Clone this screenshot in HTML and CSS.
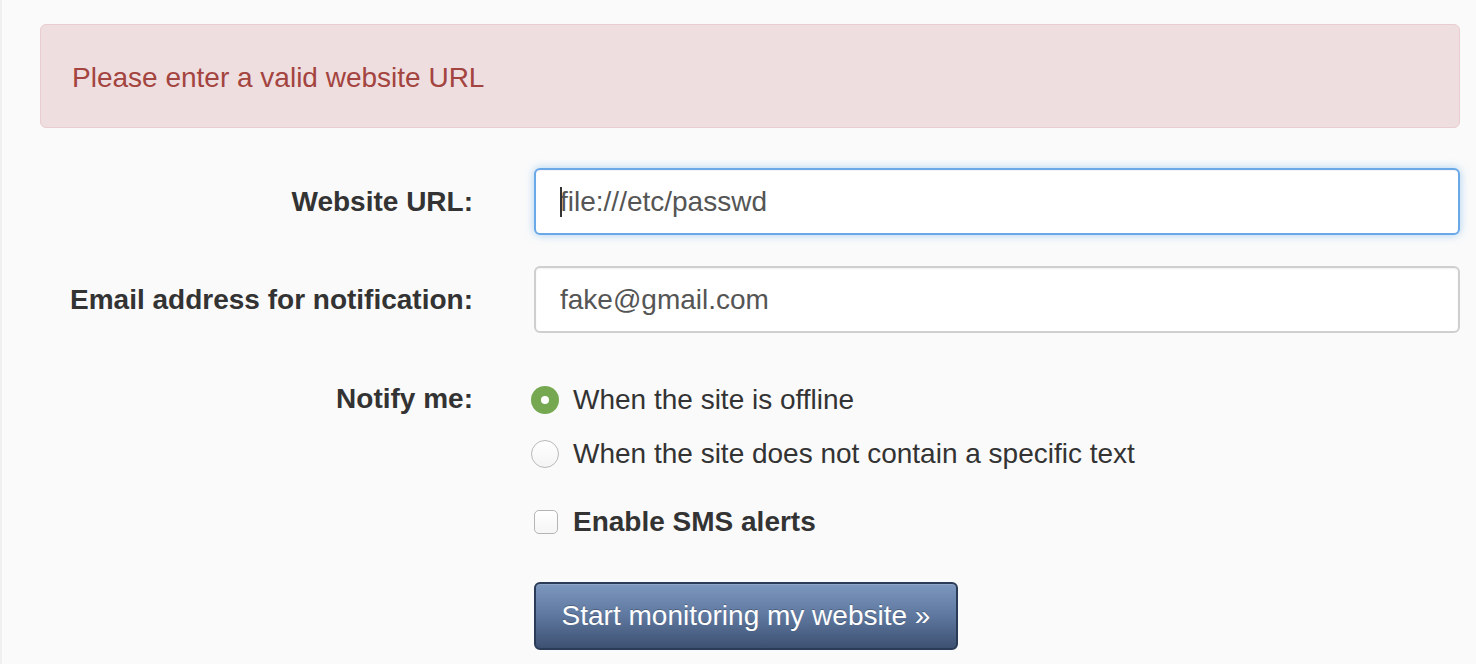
FILE: index.html
```html
<!DOCTYPE html>
<html>
<head>
<meta charset="utf-8">
<link rel="stylesheet" href="styles.css">
</head>
<body>
<div class="page">
  <div class="alert">Please enter a valid website URL</div>
  <form class="form">
    <label class="label row-url" for="url">Website URL:</label>
    <div class="field row-url">
      <div class="input focus"><span class="caret"></span>file:///etc/passwd</div>
    </div>
    <label class="label row-email" for="email">Email address for notification:</label>
    <div class="field row-email">
      <div class="input">fake@gmail.com</div>
    </div>
    <div class="label row-notify">Notify me:</div>
    <div class="field row-notify options">
      <div class="option"><span class="radio checked"></span><span>When the site is offline</span></div>
      <div class="option"><span class="radio"></span><span>When the site does not contain a specific text</span></div>
      <div class="option sms"><span class="checkbox"></span><span class="bold">Enable SMS alerts</span></div>
      <div class="actions"><button type="button" class="btn">Start monitoring my website »</button></div>
    </div>
  </form>
</div>
</body>
</html>
```

FILE: styles.css
```css
html, body {
  margin: 0;
  padding: 0;
}
body {
  background: #fafafa;
  border-left: 2px solid #efefef;
  font-family: "Liberation Sans", Arial, Helvetica, sans-serif;
  color: #333;
  min-height: 664px;
  box-sizing: border-box;
}
.page {
  padding: 24px 16px 0 38px;
}
.alert {
  height: 104px;
  box-sizing: border-box;
  background: #efdedf;
  border: 1px solid #e9cdd1;
  border-radius: 6px;
  color: #a34440;
  font-size: 28px;
  line-height: 102px;
  padding: 2px 0 0 31px;
}
.form {
  display: grid;
  grid-template-columns: 433px 1fr;
  column-gap: 61px;
  margin-top: 40px;
}
.label {
  text-align: right;
  font-weight: bold;
  font-size: 28px;
  color: #333;
  line-height: 67px;
}
.row-email { margin-top: 31px; }
.row-notify { margin-top: 40px; }
.label.row-notify { line-height: 54px; margin-top: 39px; }
.input {
  height: 67px;
  box-sizing: border-box;
  background: #fff;
  border: 2px solid #cfcfcf;
  border-radius: 6px;
  font-size: 28px;
  line-height: 63px;
  color: #555;
  padding-left: 24px;
  box-shadow: inset 0 1px 2px rgba(0,0,0,0.06);
  position: relative;
}
.input.focus {
  border-color: #6aa8e8;
  box-shadow: inset 0 1px 1px rgba(0,0,0,0.05), 0 0 8px rgba(102,175,233,0.55);
}
.caret {
  position: absolute;
  left: 24px;
  top: 17px;
  width: 2px;
  height: 30px;
  background: #333;
}
.options {
  display: flex;
  flex-direction: column;
  margin-left: -3px;
}
.option {
  display: flex;
  align-items: center;
  gap: 14px;
  font-size: 28px;
  height: 54px;
  color: #333;
}
.radio {
  width: 28px;
  height: 28px;
  box-sizing: border-box;
  border-radius: 50%;
  border: 1px solid #b9b9b9;
  background: linear-gradient(#fff, #f4f4f4);
  display: inline-flex;
  align-items: center;
  justify-content: center;
  flex: none;
}
.radio.checked {
  border: none;
  background: #75a851;
}
.radio.checked::after {
  content: "";
  width: 8px;
  height: 8px;
  border-radius: 50%;
  background: #fff;
}
.option.sms {
  margin-top: 14px;
  padding-left: 3px;
  gap: 15px;
}
.checkbox {
  width: 24px;
  height: 24px;
  box-sizing: border-box;
  border: 1px solid #b5b5b5;
  border-radius: 5px;
  background: linear-gradient(#fff, #f5f5f5);
  flex: none;
}
.bold {
  font-weight: bold;
}
.actions {
  margin-top: 33px;
  padding-left: 3px;
}
.btn {
  display: block;
  height: 68px;
  width: 424px;
  box-sizing: border-box;
  border: 2px solid #2a3b58;
  border-radius: 6px;
  background: linear-gradient(#7c97be, #5e779e 50%, #3d5172);
  color: #fff;
  font-family: "Liberation Sans", Arial, Helvetica, sans-serif;
  font-size: 28px;
  text-shadow: 0 -1px 0 rgba(0,0,0,0.25);
  padding: 0;
  box-shadow: inset 0 1px 0 rgba(255,255,255,0.15);
}
```
